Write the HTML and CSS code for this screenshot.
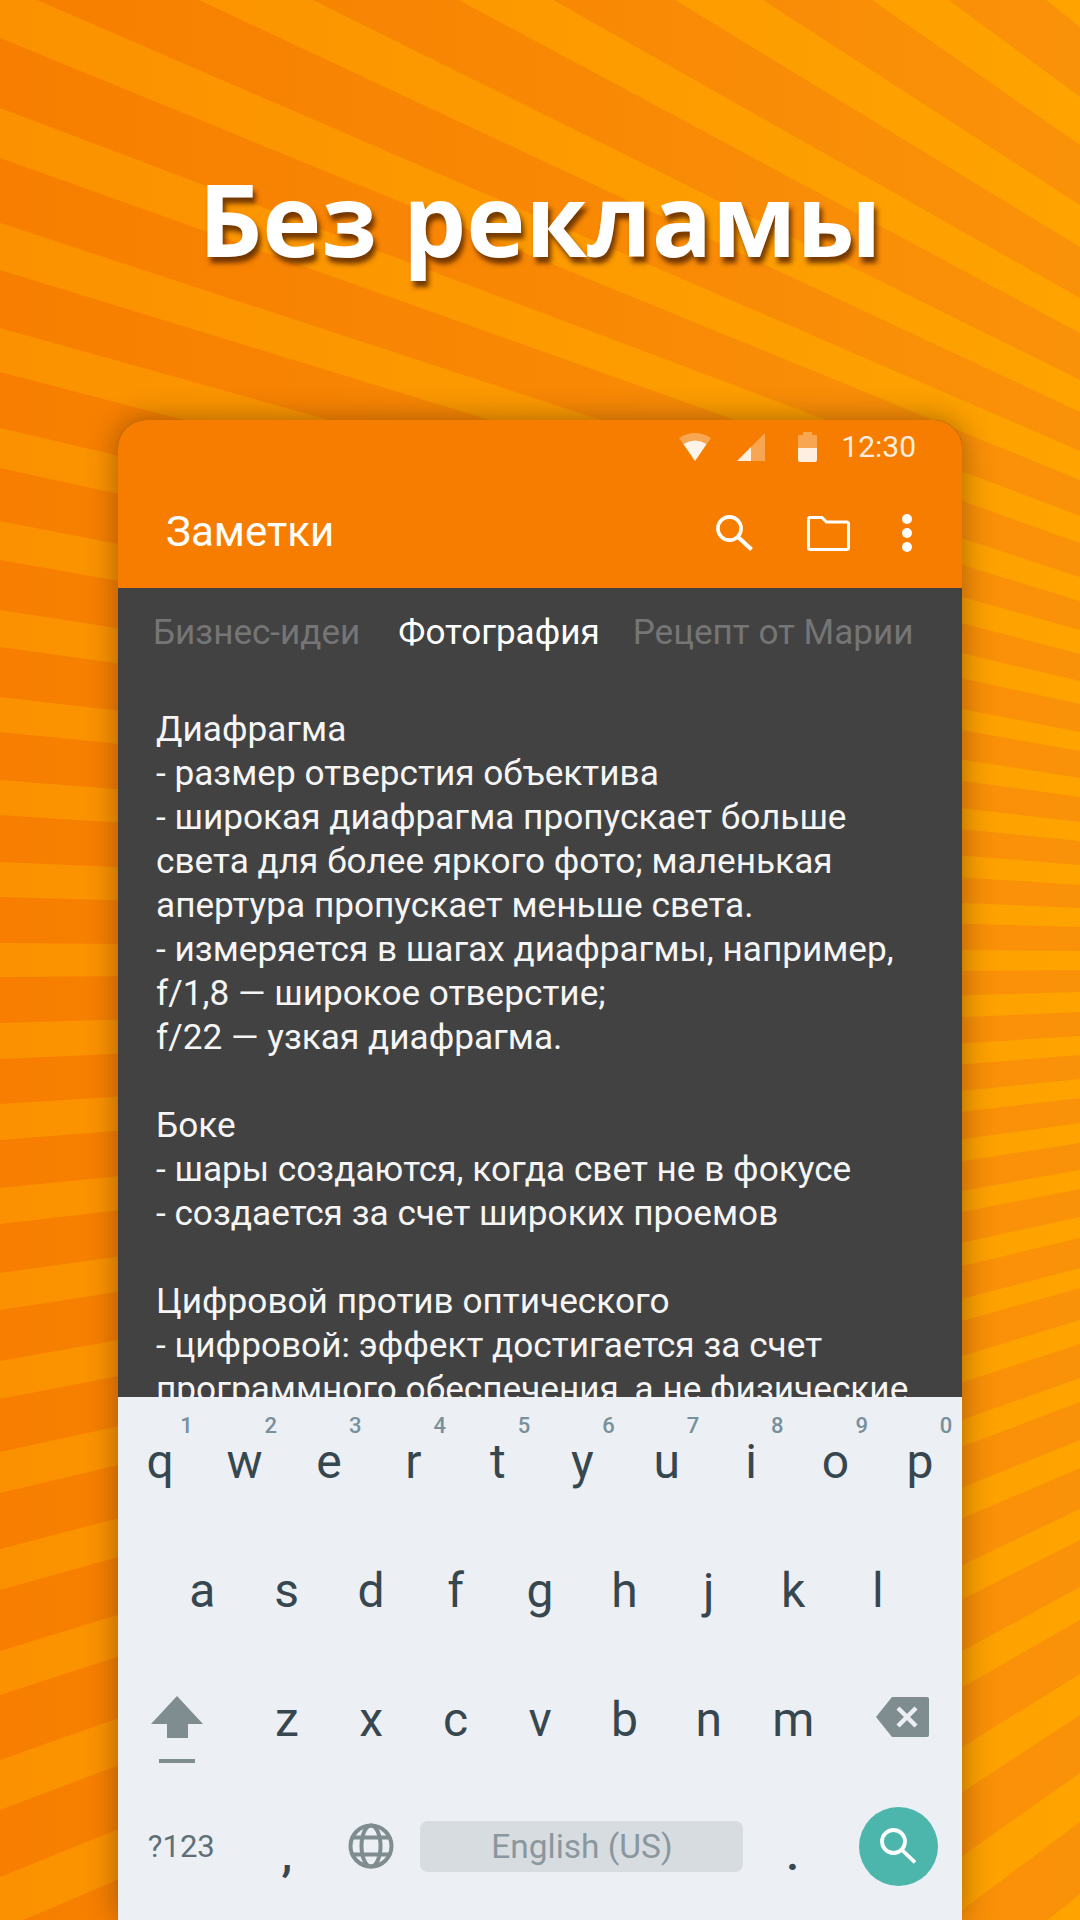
FILE: index.html
```html
<!DOCTYPE html>
<html lang="ru">
<head>
<meta charset="utf-8">
<title>Без рекламы</title>
<link rel="stylesheet" href="styles.css">
</head>
<body>
<div class="stage">
  <!-- background rays: x=0 edge to x=1080 edge -->
  <svg class="rays" width="1080" height="1920" viewBox="0 0 1080 1920">
    <defs>
      <linearGradient id="rayFill" gradientUnits="userSpaceOnUse" x1="0" y1="0" x2="1080" y2="0">
        <stop offset="0" stop-color="#fb9100"/>
        <stop offset="1" stop-color="#fea300"/>
      </linearGradient>
    </defs>
    <path fill="url(#rayFill)" d="M0 -956L1080 -35L1080 27L0 -836Z
      M0 -701L1080 97L1080 145L0 -608Z
      M0 -493L1080 205L1080 247L0 -412Z
      M0 -313L1080 298L1080 333L0 -246Z
      M0 -155L1080 380L1080 412L0 -93Z
      M0 -16L1080 451L1080 480L0 38Z
      M0 108L1080 516L1080 543L0 158Z
      M0 223L1080 577L1080 601L0 270Z
      M0 328L1080 630L1080 654L0 372Z
      M0 428L1080 681L1080 704L0 468Z
      M0 521L1080 732L1080 751L0 560Z
      M0 610L1080 778L1080 797L0 647Z
      M0 697L1080 822L1080 841L0 732Z
      M0 780L1080 865L1080 885L0 815Z
      M0 862L1080 908L1080 927L0 897Z
      M0 943L1080 951L1080 970L0 977Z
      M0 1023L1080 992L1080 1012L0 1059Z
      M0 1104L1080 1036L1080 1055L0 1140Z
      M0 1188L1080 1079L1080 1098L0 1224Z
      M0 1273L1080 1123L1080 1143L0 1310Z
      M0 1361L1080 1170L1080 1189L0 1399Z
      M0 1452L1080 1217L1080 1238L0 1493Z
      M0 1549L1080 1268L1080 1288L0 1590Z
      M0 1651L1080 1320L1080 1344L0 1695Z
      M0 1760L1080 1378L1080 1402L0 1810Z
      M0 1877L1080 1440L1080 1468L0 1930Z
      M0 2024L1080 1509L1080 1540L0 2084Z
      M0 2175L1080 1587L1080 1620L0 2238Z
      M0 2343L1080 1674L1080 1715L0 2422Z
      M0 2534L1080 1773L1080 1822L0 2628Z
      M0 2767L1080 1894L1080 1950L0 2875Z"/>
  </svg>

  <h1 class="headline">Без рекламы</h1>

  <div class="phone">
    <div class="appbar">
      <div class="status">
        <svg class="ic-wifi" width="32" height="28" viewBox="0 0 32 28">
          <path class="dim" d="M0 5Q16 -5 32 5L16 28Z"/>
          <path class="lit" d="M4.500 11Q16 4 27.500 11L16 28Z"/>
        </svg>
        <svg class="ic-signal" width="28" height="28" viewBox="0 0 28 28">
          <path class="dim" d="M14 14L28 0V28H14Z"/>
          <path class="lit" d="M0 28L14 14V28Z"/>
        </svg>
        <svg class="ic-battery" width="19" height="30" viewBox="0 0 19 30">
          <path class="dim" d="M5 0H14V3H18Q19 3 19 4V16H0V4Q0 3 1 3H5Z"/>
          <path class="lit" d="M0 16H19V28Q19 30 17 30H2Q0 30 0 28Z"/>
        </svg>
        <span class="clock">12:30</span>
      </div>
      <div class="toolbar">
        <span class="app-title">Заметки</span>
        <div class="actions">
          <svg width="37" height="36" viewBox="0 0 37 36">
            <circle cx="13.500" cy="13.500" r="11.600" fill="none" stroke="#fff" stroke-width="3.600"/>
            <path d="M21.500 21.500L35.500 34.500" stroke="#fff" stroke-width="4" fill="none"/>
          </svg>
          <svg width="43" height="35" viewBox="0 0 43 35">
            <path d="M3 1.500H15L19.500 6H39.500Q41.500 6 41.500 8V31.500Q41.500 33.500 39.500 33.500H3.500Q1.500 33.500 1.500 31.500V3Q1.500 1.500 3 1.500Z" fill="none" stroke="#fff" stroke-width="3"/>
          </svg>
          <div class="dots"><i></i><i></i><i></i></div>
        </div>
      </div>
    </div>

    <div class="tabs">
      <span class="tab">Бизнес-идеи</span>
      <span class="tab active">Фотография</span>
      <span class="tab">Рецепт от Марии</span>
    </div>

    <div class="note">Диафрагма
- размер отверстия объектива
- широкая диафрагма пропускает больше
света для более яркого фото; маленькая
апертура пропускает меньше света.
- измеряется в шагах диафрагмы, например,
f/1,8 — широкое отверстие;
f/22 — узкая диафрагма.

Боке
- шары создаются, когда свет не в фокусе
- создается за счет широких проемов

Цифровой против оптического
- цифровой: эффект достигается за счет
программного обеспечения, а не физические</div>

    <div class="keyboard">
      <div class="row">
        <span class="key">q<b>1</b></span>
        <span class="key">w<b>2</b></span>
        <span class="key">e<b>3</b></span>
        <span class="key">r<b>4</b></span>
        <span class="key">t<b>5</b></span>
        <span class="key">y<b>6</b></span>
        <span class="key">u<b>7</b></span>
        <span class="key">i<b>8</b></span>
        <span class="key">o<b>9</b></span>
        <span class="key">p<b>0</b></span>
      </div>
      <div class="row row-home">
        <span class="key">a</span>
        <span class="key">s</span>
        <span class="key">d</span>
        <span class="key">f</span>
        <span class="key">g</span>
        <span class="key">h</span>
        <span class="key">j</span>
        <span class="key">k</span>
        <span class="key">l</span>
      </div>
      <div class="row">
        <span class="key key-wide">
          <svg class="ic-shift" width="52" height="68" viewBox="0 0 52 68">
            <path d="M26 0L52 28H37V42H16V28H0Z" fill="#7f8c90"/>
            <rect x="8" y="63" width="36" height="4" fill="#7f8c90"/>
          </svg>
        </span>
        <span class="key">z</span>
        <span class="key">x</span>
        <span class="key">c</span>
        <span class="key">v</span>
        <span class="key">b</span>
        <span class="key">n</span>
        <span class="key">m</span>
        <span class="key key-wide">
          <svg class="ic-del" width="54" height="40" viewBox="0 0 54 40">
            <path d="M16 0H51Q53 0 53 2V38Q53 40 51 40H16L0 20Z" fill="#7f8c90"/>
            <path d="M22 11L40 29M40 11L22 29" stroke="#eceff3" stroke-width="4.500" fill="none"/>
          </svg>
        </span>
      </div>
      <div class="row row-bottom">
        <span class="key key-wide key-sym">?123</span>
        <span class="key key-punct">,</span>
        <span class="key">
          <svg width="46" height="46" viewBox="0 0 46 46" fill="none" stroke="#7f8c90" stroke-width="4">
            <circle cx="23" cy="23" r="20.500"/>
            <ellipse cx="23" cy="23" rx="9.500" ry="20.500"/>
            <path d="M5 14.500H41M5 31.500H41"/>
          </svg>
        </span>
        <div class="space"><span>English (US)</span></div>
        <span class="key key-punct">.</span>
        <span class="key key-wide">
          <span class="go">
            <svg width="36" height="36" viewBox="0 0 36 36">
              <circle cx="13.500" cy="13.500" r="11.500" fill="none" stroke="#fff" stroke-width="3.800"/>
              <path d="M21.500 21.500L35 34.500" stroke="#fff" stroke-width="3.800" fill="none"/>
            </svg>
          </span>
        </span>
      </div>
    </div>
  </div>
</div>
</body>
</html>
```

FILE: styles.css
```css
*{margin:0;padding:0;box-sizing:border-box;}
html,body{width:1080px;height:1920px;overflow:hidden;}
body{font-family:Roboto,"Noto Sans",sans-serif;}

.stage{position:relative;width:1080px;height:1920px;overflow:hidden;background:linear-gradient(90deg,#f77e00,#fa9209);}
.rays{position:absolute;left:0;top:0;}

.headline{position:relative;height:420px;padding-top:148px;text-align:center;font-family:"Open Sans","Noto Sans",sans-serif;font-size:100px;line-height:140px;font-weight:700;color:#fff;text-shadow:3px 6px 5px rgba(90,40,0,.85);}

.phone{position:relative;display:flex;flex-direction:column;width:844px;height:1500px;margin-left:118px;border-radius:28px 28px 0 0;background:#424242;box-shadow:0 0 30px rgba(60,30,0,.45);}

.appbar{background:#f77d00;border-radius:28px 28px 0 0;height:168px;flex:none;}
.status{display:flex;align-items:center;justify-content:flex-end;height:54px;padding-right:46px;}
.status .dim{fill:rgba(255,255,255,.32);}
.status .lit{fill:rgba(255,255,255,.88);}
.ic-wifi{margin-right:26px;}
.ic-signal{margin-right:33px;}
.ic-battery{margin-right:24px;}
.clock{font-size:30px;line-height:54px;color:rgba(255,255,255,.88);}

.toolbar{display:flex;align-items:center;justify-content:space-between;height:114px;padding:4px 50px 0 48px;}
.app-title{font-size:42px;color:#fff;margin-top:-4px;}
.actions{display:flex;align-items:center;gap:54px;}
.dots{display:flex;flex-direction:column;gap:4px;margin-left:-2px;}
.dots i{display:block;width:10px;height:10px;border-radius:50%;background:#fff;}

.tabs{display:flex;flex:none;height:88px;align-items:center;padding-left:35px;font-size:35.100px;white-space:nowrap;}
.tab{color:#757575;}
.tab.active{color:#fff;margin:0 33px 0 38px;}

.note{flex:1;min-height:0;overflow:hidden;padding:31px 0 0 38px;font-size:35.200px;line-height:44px;color:#f5f5f5;white-space:pre;}

.keyboard{flex:none;height:523px;background:#eceff3;}
.row{display:flex;height:129px;}
.row-home{padding:0 42px;}
.row-bottom{padding-bottom:5px;}
.key{position:relative;flex:1 1 0;display:flex;align-items:center;justify-content:center;font-size:48px;color:#37474f;}
.key b{position:absolute;left:50%;top:18px;margin-left:20px;font-size:22px;line-height:22px;font-weight:500;color:#78909c;}
.key-wide{flex:1.5 1 0;}
.row-bottom .key{flex:none;width:84.400px;}
.row-bottom .key-wide{width:126.600px;}
.ic-shift{margin:20px 8px 0 0;}
.ic-del{margin:0 0 5px 8px;}
.key-sym{font-size:31px;color:#5f6f78;}
.key-punct{font-weight:500;padding-top:14px;}
.space{flex:none;width:323px;margin:0 7px;display:flex;align-items:center;}
.space span{display:block;width:100%;height:51px;line-height:51px;text-align:center;border-radius:8px;background:#d7dce0;font-size:33.500px;color:#8a979e;}
.go{display:flex;align-items:center;justify-content:center;width:79px;height:79px;border-radius:50%;background:#4db6ac;}
```
